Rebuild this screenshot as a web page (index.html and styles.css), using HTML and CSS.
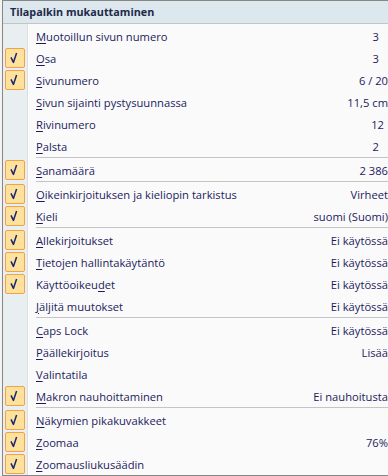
FILE: index.html
```html
<!DOCTYPE html>
<html lang="fi">
<head>
    <meta charset="UTF-8">
    <title>Tilapalkin mukauttaminen</title>
    <link rel="stylesheet" href="styles.css">
</head>
<body>

<div class="menu">
    <div class="menu-title">Tilapalkin mukauttaminen</div>
    <ul class="menu-list">
        <li class="item"><span class="icon"></span><span class="label"><u>M</u>uotoillun sivun numero</span><span class="value pad-9">3</span></li>
        <li class="item"><span class="icon"><span class="check"><svg viewBox="0 0 18 18"><path d="M5 8.4 L7.4 13.4 L10.6 4"/></svg></span></span><span class="label"><u>O</u>sa</span><span class="value pad-9">3</span></li>
        <li class="item"><span class="icon"><span class="check"><svg viewBox="0 0 18 18"><path d="M5 8.4 L7.4 13.4 L10.6 4"/></svg></span></span><span class="label"><u>S</u>ivunumero</span><span class="value">6 / 20</span></li>
        <li class="item"><span class="icon"></span><span class="label"><u>S</u>ivun sijainti pystysuunnassa</span><span class="value">11,5 cm</span></li>
        <li class="item"><span class="icon"></span><span class="label"><u>R</u>ivinumero</span><span class="value pad-4">12</span></li>
        <li class="item"><span class="icon"></span><span class="label"><u>P</u>alsta</span><span class="value pad-9">2</span></li>
        <li class="sep"></li>
        <li class="item"><span class="icon"><span class="check"><svg viewBox="0 0 18 18"><path d="M5 8.4 L7.4 13.4 L10.6 4"/></svg></span></span><span class="label"><u>S</u>anamäärä</span><span class="value">2 386</span></li>
        <li class="sep"></li>
        <li class="item"><span class="icon"><span class="check"><svg viewBox="0 0 18 18"><path d="M5 8.4 L7.4 13.4 L10.6 4"/></svg></span></span><span class="label"><u>O</u>ikeinkirjoituksen ja kieliopin tarkistus</span><span class="value">Virheet</span></li>
        <li class="item"><span class="icon"><span class="check"><svg viewBox="0 0 18 18"><path d="M5 8.4 L7.4 13.4 L10.6 4"/></svg></span></span><span class="label"><u>K</u>ieli</span><span class="value">suomi (Suomi)</span></li>
        <li class="sep"></li>
        <li class="item"><span class="icon"><span class="check"><svg viewBox="0 0 18 18"><path d="M5 8.4 L7.4 13.4 L10.6 4"/></svg></span></span><span class="label"><u>A</u>llekirjoitukset</span><span class="value">Ei käytössä</span></li>
        <li class="item"><span class="icon"><span class="check"><svg viewBox="0 0 18 18"><path d="M5 8.4 L7.4 13.4 L10.6 4"/></svg></span></span><span class="label"><u>T</u>ietojen hallintakäytäntö</span><span class="value">Ei käytössä</span></li>
        <li class="item"><span class="icon"><span class="check"><svg viewBox="0 0 18 18"><path d="M5 8.4 L7.4 13.4 L10.6 4"/></svg></span></span><span class="label">Käyttöoikeu<u>d</u>et</span><span class="value">Ei käytössä</span></li>
        <li class="item"><span class="icon"></span><span class="label"><u>J</u>äljitä muutokset</span><span class="value">Ei käytössä</span></li>
        <li class="sep"></li>
        <li class="item"><span class="icon"></span><span class="label"><u>C</u>aps Lock</span><span class="value">Ei käytössä</span></li>
        <li class="item"><span class="icon"></span><span class="label"><u>P</u>äällekirjoitus</span><span class="value">Lisää</span></li>
        <li class="item"><span class="icon"></span><span class="label"><u>V</u>alintatila</span><span class="value"></span></li>
        <li class="item"><span class="icon"><span class="check"><svg viewBox="0 0 18 18"><path d="M5 8.4 L7.4 13.4 L10.6 4"/></svg></span></span><span class="label"><u>M</u>akron nauhoittaminen</span><span class="value">Ei nauhoitusta</span></li>
        <li class="sep"></li>
        <li class="item"><span class="icon"><span class="check"><svg viewBox="0 0 18 18"><path d="M5 8.4 L7.4 13.4 L10.6 4"/></svg></span></span><span class="label"><u>N</u>äkymien pikakuvakkeet</span><span class="value"></span></li>
        <li class="item"><span class="icon"><span class="check"><svg viewBox="0 0 18 18"><path d="M5 8.4 L7.4 13.4 L10.6 4"/></svg></span></span><span class="label"><u>Z</u>oomaa</span><span class="value">76%</span></li>
        <li class="item"><span class="icon"><span class="check"><svg viewBox="0 0 18 18"><path d="M5 8.4 L7.4 13.4 L10.6 4"/></svg></span></span><span class="label"><u>Z</u>oomausliukusäädin</span><span class="value"></span></li>
    </ul>
</div>

</body>
</html>
```

FILE: styles.css
```css
body {
    margin: 0;
    padding: 0 0 0 2px;
    background-color: #f3f3f3;
    font-family: "Open Sans", "Noto Sans", sans-serif;
    font-size: 11.2px;
    color: #1d1b5e;
    overflow: hidden;
}
.menu {
    width: 394px;
    border: 1px solid #868686;
    border-right: none;
    background-color: #fafafa;
}
.menu-title {
    height: 22px;
    line-height: 22px;
    padding-left: 7px;
    background-color: #dde7ee;
    border-bottom: 1px solid #c5c5c5;
    font-weight: bold;
    font-size: 10.8px;
    color: #1e2a4a;
}
.menu-list {
    list-style: none;
    margin: 0;
    padding: 1px 0 0 0;
    background: linear-gradient(to right, #e9eef0 0 24px, #dadfe2 24px 25px, #ffffff 25px 26px, #fafafa 26px);
}
.item {
    display: flex;
    align-items: center;
    height: 22px;
    padding-right: 9px;
}
.icon {
    width: 26px;
    height: 22px;
    display: flex;
    align-items: center;
    padding-left: 2px;
    box-sizing: border-box;
}
.check {
    width: 18px;
    height: 18px;
    border: 1px solid #f0a14a;
    border-radius: 2px;
    background-color: #fee29c;
    display: flex;
}
.check svg {
    width: 18px;
    height: 18px;
    fill: none;
    stroke: #1b2470;
    stroke-width: 1.5;
    stroke-linejoin: round;
}
.label {
    flex: 1;
    padding-left: 7px;
    white-space: nowrap;
}
.label u {
    text-underline-offset: 2px;
}
.value {
    white-space: nowrap;
    text-align: right;
}
.pad-9 {
    padding-right: 9px;
}
.pad-4 {
    padding-right: 4px;
}
.sep {
    height: 1px;
    margin: 0 0 1px 33px;
    background-color: #c5c5c5;
}
```
